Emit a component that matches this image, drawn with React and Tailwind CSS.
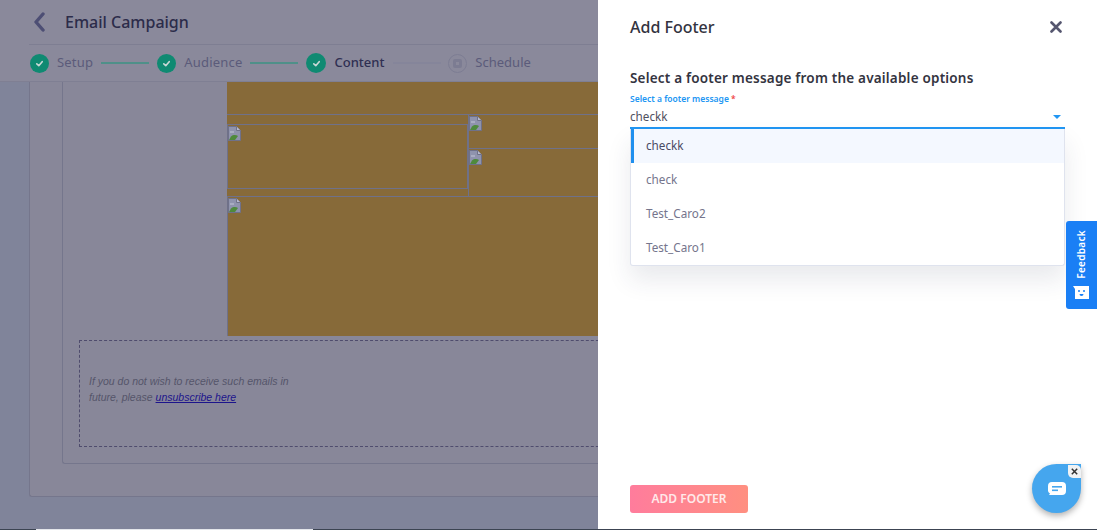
import React from "react";

const font = { fontFamily: '"Noto Sans", "Open Sans", sans-serif' };

function Check({ big }) {
  return (
    <span className={`flex shrink-0 items-center justify-center rounded-full bg-[#0f8a72] ${big ? "h-5 w-5" : "h-[19px] w-[19px]"}`}>
      <svg width="9" height="9" viewBox="0 0 10 10" fill="none" stroke="#c9d8d6" strokeWidth="1.8" strokeLinecap="round" strokeLinejoin="round">
        <path d="M2 5.4 4.2 7.4 8 3" />
      </svg>
    </span>
  );
}

function Broken() {
  return (
    <svg width="13" height="15" viewBox="0 0 13 15" className="block">
      <path d="M0.5 0.5H8.5L12.5 4.5V14.5H0.5Z" fill="#8f93ad" stroke="#6f7189" />
      <path d="M8.5 .5V4.5H12.5" fill="#b8bacb" stroke="#6f7189" />
      <path d="M1 14 3 10.5C5 8.6 8 8.6 10 10L7 14Z" fill="#4f8a3c" />
      <path d="M2 5h4v2H2z" fill="#a9adc2" />
    </svg>
  );
}

function Step({ label, active }) {
  return (
    <>
      <Check big={active} />
      <span className={`ml-[8px] text-[13px] tracking-[0.2px] ${active ? "font-medium text-[#2f2f52] tracking-[0px]" : "text-[#5b5b7a]"}`}>{label}</span>
    </>
  );
}

export default function App() {
  return (
    <div style={font} className="relative flex h-[530px] w-[1097px] flex-col overflow-hidden">
      <div className="flex min-h-0 flex-1">
        {/* left dimmed page */}
        <div className="flex w-[598px] shrink-0 flex-col overflow-hidden bg-[#80849a]">
          <div className="h-[82px] shrink-0 border-b border-[#7f7f93] bg-[#8a899b] pl-[29px]">
            <div className="flex h-[45px] items-center border-b border-[#7e7e92]">
              <svg width="14" height="20" viewBox="0 0 14 20" fill="none" stroke="#4d4e74" strokeWidth="3.4" strokeLinecap="round" strokeLinejoin="round" className="ml-[3px]">
                <path d="M11 2 4 10l7 8" />
              </svg>
              <span className="ml-[19px] text-[16px] font-medium leading-none text-[#2c2c4a]">Email Campaign</span>
            </div>
            <div className="flex h-[36px] items-center pl-px">
              <Step label="Setup" />
              <span className="ml-[8px] h-[2px] w-[48px] bg-[#4f9089]" />
              <span className="ml-[8px]" />
              <Step label="Audience" />
              <span className="ml-[8px] h-[2px] w-[48px] bg-[#4f9089]" />
              <span className="ml-[8px]" />
              <Step label="Content" active />
              <span className="ml-[9px] h-[2px] w-[48px] bg-[#85859a]" />
              <span className="ml-[7px] flex h-[19px] w-[19px] items-center justify-center rounded-full border border-[#7d7d93]">
                <span className="flex h-[9px] w-[9px] items-center justify-center rounded-[2px] bg-[#7c7c92]">
                  <span className="h-[3px] w-[3px] bg-[#8a899b]" />
                </span>
              </span>
              <span className="ml-[8px] text-[13px] tracking-[0px] text-[#5b5b7a]">Schedule</span>
            </div>
          </div>
          <div className="ml-[29px] h-[415px] w-[600px] shrink-0 rounded-bl-[3px] border-b border-l border-[#75768c] bg-[#888799] pl-[32px]">
            <div className="h-[382px] rounded-bl-[3px] border-b border-l border-[#75768c] pl-[16px]">
              <div className="ml-[148px] flex h-[254px] flex-col bg-[#876a39] pt-[32px]">
                <div className="flex h-[82px] shrink-0 border-t border-[#6f7189]">
                  <div className="w-[241px] shrink-0 pt-[9px]">
                    <div className="h-[65px] w-full border border-[#6f7189] pt-px">
                      <Broken />
                    </div>
                  </div>
                  <div className="flex flex-1 flex-col">
                    <div className="h-[33px] border-l border-[#6f7189] pt-px"><Broken /></div>
                    <div className="h-[48px] border-t border-l border-[#6f7189] pt-px"><Broken /></div>
                  </div>
                </div>
                <div className="min-h-0 flex-1 border-l border-t border-[#6f7189] pt-px"><Broken /></div>
              </div>
              <div className="mt-[4px] flex h-[107px] w-[560px] items-center border border-dashed border-[#4f4c6d] pb-[10px] pl-[9px]">
                <p className="w-[215px] text-[10.5px] italic leading-[16px] text-[#55556a] [font-family:'Liberation_Sans',sans-serif]">
                  If you do not wish to receive such emails in future, please <a className="text-[#1c148c] underline">unsubscribe here</a>
                </p>
              </div>
            </div>
          </div>
        </div>

        {/* right drawer */}
        <div className="flex min-w-0 flex-1 flex-col bg-white pl-[32px] pr-[32px]">
          <div className="flex h-[54px] shrink-0 items-center justify-between">
            <span className="text-[16px] font-medium text-[#333340]">Add Footer</span>
            <svg width="12" height="12" viewBox="0 0 12 12" stroke="#55566f" strokeWidth="2.6" strokeLinecap="round" className="mr-[3px]">
              <path d="M1.500 1.500l9 9M10.500 1.500l-9 9" />
            </svg>
          </div>
          <h2 className="mt-[14px] text-[13.5px] font-semibold leading-[20px] tracking-[0.2px] text-[#34343f]">Select a footer message from the available options</h2>
          <label className="mt-[6px] text-[8.5px] font-semibold leading-[10px] text-[#2196f3]">
            Select a footer message <span className="text-[#ef4444]">*</span>
          </label>
          <div className="flex h-[25px] w-[435px] shrink-0 items-center justify-between border-b-2 border-[#2196f3] pt-[3px] text-[11.7px] text-[#505060]">
            <span>checkk</span>
            <span className="mr-[4px] h-0 w-0 border-x-[4px] border-t-[4px] border-x-transparent border-t-[#2196f3]" />
          </div>
          <ul className="w-[435px] overflow-hidden rounded-b-[3px] border border-t-0 border-[#dfe3ee] bg-white text-[11.7px] text-[#75758c] shadow-[0_14px_24px_rgba(40,50,80,0.10)]">
            <li className="flex h-[34px] items-center border-l-[3px] border-[#1f8fee] bg-[#f4f8ff] pl-[12px] text-[#4a4a64]">checkk</li>
            <li className="flex h-[34px] items-center pl-[15px]">check</li>
            <li className="flex h-[34px] items-center pl-[15px]">Test_Caro2</li>
            <li className="flex h-[34px] items-center pl-[15px]">Test_Caro1</li>
          </ul>
          <div className="flex-1" />
          <button className="mb-[16px] h-[28px] w-[118px] rounded-[3px] bg-gradient-to-r from-[#ff7c9c] to-[#ff8f80] text-[12px] font-semibold text-[#ffe9ea]">ADD FOOTER</button>
        </div>
      </div>

      {/* bottom strip */}
      <div className="flex h-px shrink-0 bg-[#3c4452]">
        <span className="ml-[36px] w-[277px] bg-[#e4e6ea]" />
      </div>

      {/* feedback tab */}
      <div className="absolute right-0 top-[221px] flex h-[88px] w-[31px] flex-col items-center rounded-l-[3px] bg-[#1a7ff5] pr-px pt-[9px]">
        <span className="rotate-180 text-[10px] font-semibold leading-none tracking-[0.3px] text-white [writing-mode:vertical-rl]">Feedback</span>
        <svg width="16" height="13" viewBox="0 0 16 13" className="mt-[7px]">
          <path d="M0 0H16V13H2V3Z" fill="#fff" />
          <circle cx="6" cy="5" r="1" fill="#1a7ff5" />
          <circle cx="11" cy="5" r="1" fill="#1a7ff5" />
          <path d="M6.500 8h4a2 2 0 0 1-4 0Z" fill="#1a7ff5" />
        </svg>
      </div>

      {/* chat bubble */}
      <div className="absolute left-[1032px] top-[464px] flex h-[49px] w-[49px] items-center justify-center rounded-full rounded-tr-[6px] bg-[#45a6ee] shadow-[0_3px_6px_rgba(0,0,0,0.3)]">
        <svg width="20" height="16" viewBox="0 0 20 16">
          <path d="M5 1h10a4 4 0 0 1 4 4v5a4 4 0 0 1-4 4H2l1-1.500A4 4 0 0 1 1 10V5a4 4 0 0 1 4-4Z" fill="#fff" />
          <rect x="5" y="5" width="10" height="1.600" fill="#45a6ee" />
          <rect x="5" y="8.500" width="6" height="1.600" fill="#45a6ee" />
        </svg>
        <span className="absolute right-0 top-[1px] flex h-[13px] w-[13px] items-center justify-center rounded-bl-[5px] rounded-tr-[5px] bg-[#f0f2f4]">
          <svg width="7" height="7" viewBox="0 0 7 7" stroke="#333" strokeWidth="1.500">
            <path d="M.8.8l5.400 5.400M6.200.8.800 6.200" />
          </svg>
        </span>
      </div>
    </div>
  );
}
